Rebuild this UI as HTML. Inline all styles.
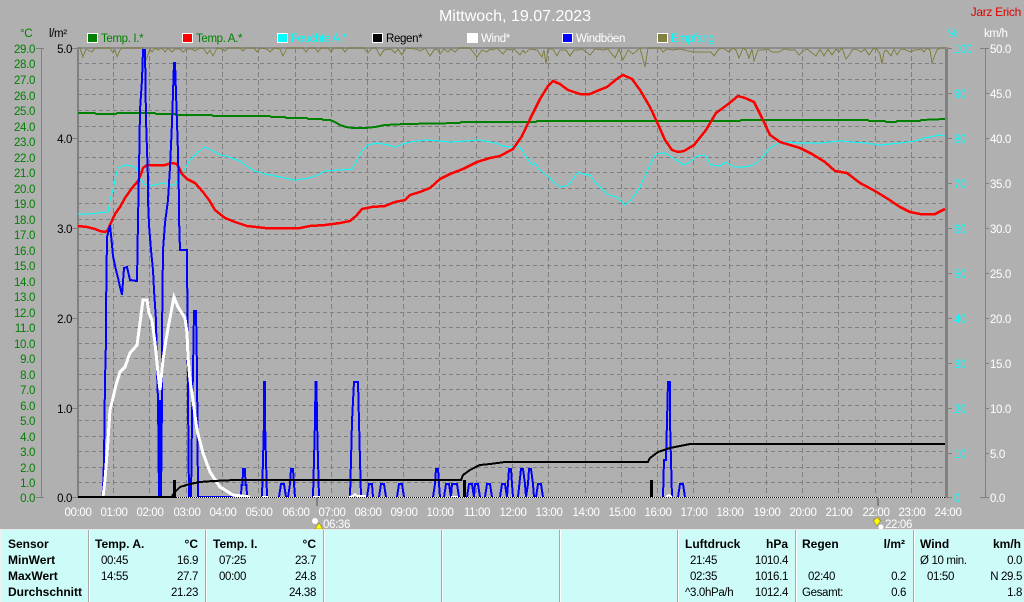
<!DOCTYPE html>
<html><head><meta charset="utf-8"><style>
html,body{margin:0;padding:0;background:#b0b0b0;overflow:hidden}
svg{display:block}
text{font-family:"Liberation Sans",sans-serif;font-size:11.5px;letter-spacing:-.35px}
.c{shape-rendering:crispEdges;fill:none}
.b{font-weight:bold;font-size:12px;letter-spacing:0;fill:#000}
.k{fill:#000}
.e{text-anchor:end}
.m{text-anchor:middle}
</style></head><body>
<svg width="1024" height="602" viewBox="0 0 1024 602" xmlns="http://www.w3.org/2000/svg">
<rect width="1024" height="602" fill="#b0b0b0"/>
<text x="515" y="21" class="m" style="font-size:16px;letter-spacing:0" fill="#fff">Mittwoch, 19.07.2023</text>
<text x="1021" y="16" class="e" style="font-size:12px;letter-spacing:-.3px" fill="#e00000">Jarz Erich</text>

<!-- legend -->
<g stroke="#fff" stroke-width="1" class="c" style="fill:none">
<rect x="87.500" y="33.500" width="10" height="9" style="fill:#008000"/>
<rect x="182.500" y="33.500" width="10" height="9" style="fill:#f00"/>
<rect x="277.500" y="33.500" width="10" height="9" style="fill:#0ff"/>
<rect x="372.500" y="33.500" width="10" height="9" style="fill:#000"/>
<rect x="467.500" y="33.500" width="10" height="9" style="fill:#fff"/>
<rect x="562.500" y="33.500" width="10" height="9" style="fill:#00f"/>
<rect x="657.500" y="33.500" width="10" height="9" style="fill:#808040"/>
</g>
<g>
<text x="101" y="42" fill="#008000">Temp. I.*</text>
<text x="196" y="42" fill="#008000">Temp. A.*</text>
<text x="291" y="42" fill="#0ff">Feuchte A.*</text>
<text x="386" y="42" fill="#000">Regen*</text>
<text x="481" y="42" fill="#fff">Wind*</text>
<text x="576" y="42" fill="#fff">Windböen</text>
<text x="671" y="42" fill="#0ff">Empfang</text>
</g>

<text x="20" y="37" fill="#008000">°C</text>
<text x="49" y="37" fill="#000">l/m²</text>
<text x="948" y="37" fill="#0ff">%</text>
<text x="984" y="37" fill="#fff">km/h</text>

<!-- grid -->
<path class="c" stroke="#808080" stroke-dasharray="4 3" d="M78 63.500H945M78 79.500H945M78 94.500H945M78 110.500H945M78 126.500H945M78 141.500H945M78 157.500H945M78 172.500H945M78 188.500H945M78 203.500H945M78 219.500H945M78 234.500H945M78 250.500H945M78 265.500H945M78 281.500H945M78 296.500H945M78 312.500H945M78 327.500H945M78 343.500H945M78 358.500H945M78 374.500H945M78 389.500H945M78 405.500H945M78 420.500H945M78 436.500H945M78 451.500H945M78 467.500H945M78 482.500H945"/>
<path class="c" stroke="#808080" stroke-dasharray="5 3" d="M113.500 48V498M149.500 48V498M186.500 48V498M222.500 48V498M258.500 48V498M295.500 48V498M331.500 48V498M367.500 48V498M403.500 48V498M439.500 48V498M476.500 48V498M512.500 48V498M548.500 48V498M585.500 48V498M621.500 48V498M657.500 48V498M693.500 48V498M729.500 48V498M766.500 48V498M802.500 48V498M838.500 48V498M875.500 48V498M911.500 48V498"/>

<!-- axes -->
<g class="c" stroke="#808080">
<path d="M41.500 48V498M36 48.500H44M36 497.500H44"/>
<path d="M72 48.500H78M72 138.500H78M72 228.500H78M72 318.500H78M72 408.500H78M72 497.500H78"/>
<path d="M947 48.500H952M947 93.500H952M947 138.500H952M947 183.500H952M947 228.500H952M947 273.500H952M947 318.500H952M947 363.500H952M947 408.500H952M947 453.500H952M947 497.500H952"/>
<path d="M985.500 48V498M980 48.500H989M985 93.500H989M985 138.500H989M985 183.500H989M985 228.500H989M985 273.500H989M985 318.500H989M985 363.500H989M985 408.500H989M985 453.500H989M980 497.500H989"/>
</g>
<rect x="77" y="47" width="2" height="451" fill="#808080"/>
<rect x="945" y="47" width="3" height="451" fill="#808080"/>
<rect x="77" y="47" width="871" height="2" fill="#8c8c8c"/>

<!-- left labels -->
<g fill="#008000" class="e">
<text x="35" y="53">29.0</text><text x="35" y="68">28.0</text><text x="35" y="84">27.0</text><text x="35" y="100">26.0</text><text x="35" y="115">25.0</text><text x="35" y="131">24.0</text><text x="35" y="146">23.0</text><text x="35" y="162">22.0</text><text x="35" y="177">21.0</text><text x="35" y="193">20.0</text><text x="35" y="208">19.0</text><text x="35" y="224">18.0</text><text x="35" y="239">17.0</text><text x="35" y="255">16.0</text><text x="35" y="270">15.0</text><text x="35" y="286">14.0</text><text x="35" y="301">13.0</text><text x="35" y="317">12.0</text><text x="35" y="332">11.0</text><text x="35" y="348">10.0</text><text x="35" y="363">9.0</text><text x="35" y="379">8.0</text><text x="35" y="394">7.0</text><text x="35" y="410">6.0</text><text x="35" y="425">5.0</text><text x="35" y="441">4.0</text><text x="35" y="456">3.0</text><text x="35" y="472">2.0</text><text x="35" y="487">1.0</text><text x="35" y="502">0.0</text>
</g>
<g fill="#000" class="e">
<text x="72" y="53">5.0</text><text x="72" y="143">4.0</text><text x="72" y="233">3.0</text><text x="72" y="323">2.0</text><text x="72" y="413">1.0</text><text x="72" y="502">0.0</text>
</g>
<g fill="#0ff">
<text x="954" y="53">100</text><text x="954" y="98">90</text><text x="954" y="143">80</text><text x="954" y="188">70</text><text x="954" y="233">60</text><text x="954" y="278">50</text><text x="954" y="323">40</text><text x="954" y="368">30</text><text x="954" y="413">20</text><text x="954" y="458">10</text><text x="954" y="502">0</text>
</g>
<g fill="#fff">
<text x="990" y="53">50.0</text><text x="990" y="98">45.0</text><text x="990" y="143">40.0</text><text x="990" y="188">35.0</text><text x="990" y="233">30.0</text><text x="990" y="278">25.0</text><text x="990" y="323">20.0</text><text x="990" y="368">15.0</text><text x="990" y="413">10.0</text><text x="990" y="458">5.0</text><text x="990" y="502">0.0</text>
</g>

<!-- olive -->
<polyline class="c" stroke="#808040" points="78,48 80,48 83,57 86,49 88,50 92,52 95,48 110,48 113,53 115,50 117,57 120,50 122,48 143,48 146,60 150,49 152,52 155,48 158,50 162,48 165,52 168,48 172,52 175,49 180,49 183,52 187,49 192,49 195,51 200,48 204,49 207,54 210,50 213,56 217,48 222,49 225,51 228,48 240,48 243,51 246,48 254,48 257,52 260,48 267,49 270,52 274,48 280,49 283,56 287,48 303,48 306,52 309,48 315,48 318,52 321,48 328,48 331,52 334,48 342,48 345,52 348,48 364,48 368,53 372,48 376,48 380,56 384,50 391,49 395,53 398,49 402,55 406,48 416,49 420,51 425,48 430,56 434,50 437,49 440,54 444,49 448,52 451,49 455,52 459,48 470,48 477,57 482,50 487,52 490,49 493,50 497,48 503,54 507,49 510,50 514,49 520,55 523,50 525,53 530,49 537,50 542,57 544,50 546,64 548,49 553,49 557,56 560,50 563,50 566,50 570,56 574,50 578,50 582,49 590,55 595,49 603,50 608,49 615,58 619,49 623,60 628,50 633,54 640,48 645,67 648,48 660,48 663,52 667,49 673,50 680,49 693,52 711,52 714,56 718,50 722,48 726,50 729,52 733,48 736,50 739,58 743,48 746,50 749,58 752,49 754,61 758,50 762,50 768,49 772,52 779,52 784,49 790,50 795,50 799,55 803,51 807,49 811,52 816,56 820,49 824,56 828,49 832,55 836,49 839,52 842,48 846,59 850,54 852,50 856,49 861,52 865,49 869,55 873,49 876,48 880,54 882,64 884,52 886,50 888,52 891,56 894,49 897,55 900,50 902,49 906,50 911,52 914,50 917,50 921,49 924,52 927,48 930,50 932,63 935,55 937,50 940,48 945,48"/>

<!-- cyan -->
<polyline class="c" stroke="#0ff" points="78,214 90,214 97,213 108,212 110,200 113,190 116,175 118,168 125,165 132,166 136,168 140,178 144,184 149,186 155,185 163,183 170,185 175,185 180,176 184,170 190,160 198,152 205,147 213,151 220,155 232,158 240,161 248,167 255,171 265,174 280,177 295,180 310,178 318,175 325,171 340,170 352,169 355,164 358,158 362,151 368,145 378,143 388,145 395,147 403,144 410,142 425,140 440,141 450,142 465,141 480,140 495,143 503,146 510,147 518,146 522,150 525,155 529,161 532,165 535,163 538,168 541,171 546,175 550,178 555,183 560,187 566,186 570,183 575,176 578,172 583,174 590,175 595,182 600,187 607,194 612,196 617,197 621,201 625,205 630,201 636,193 640,187 645,176 650,165 656,154 665,153 675,159 684,165 690,162 697,156 705,155 708,160 711,165 720,166 726,162 731,165 735,167 743,167 750,166 755,164 760,160 765,154 770,148 777,144 785,142 800,143 820,143 830,142 840,141 852,142 865,143 880,145 890,144 900,143 915,141 925,138 930,137 940,135 945,136"/>

<!-- green -->
<polyline class="c" stroke="#008000" stroke-width="2" points="78,113 95,113 96,114 116,114 117,113 155,113 156,114 175,114 176,115 212,115 213,116 270,116 271,117 285,117 286,118 307,118 308,119 322,119 323,120 330,120 335,122 340,125 346,127 353,128 365,128 375,127 385,125 405,124 460,123 461,122 536,122 537,121 740,121 741,120 868,120 869,121 885,121 886,122 896,122 897,121 920,121 921,120 945,119"/>

<!-- red -->
<polyline class="c" stroke="#f00" stroke-width="2.500" points="78,226 87,227 95,229 100,231 105,232 108,230 110,225 115,214 120,207 125,198 132,188 138,181 141,174 143,168 147,165 155,165 165,165 172,163 177,164 182,174 187,179 195,183 203,192 209,200 215,210 225,218 235,222 247,226 265,228 280,228 300,228 310,226 325,225 340,223 350,221 356,216 362,209 372,207 385,206 395,202 405,200 410,195 420,192 430,188 440,179 450,174 463,169 477,162 490,158 500,156 513,149 522,136 530,119 540,99 548,86 553,81 560,84 568,90 580,94 590,94 597,91 607,87 618,78 623,75 632,79 640,90 650,107 657,122 665,140 672,150 678,152 684,151 694,145 706,130 716,113 727,105 738,96 745,98 754,102 762,118 770,135 780,142 800,148 812,154 825,162 835,171 847,173 860,183 875,191 888,199 900,207 910,212 920,214 935,214 945,209"/>

<!-- blue gusts -->
<path class="c" stroke="#00f" stroke-width="2" d="M102 497L103 490 104 460 105 380 106 340 106 310 107 237 110 225 112 245 113 256 115 266 118 278 120 287 122 295 124 268 127 267 130 280 137 281 138 220 139 170 140 110 142 80 143 50 145 50 146 120 148 180 148 200 149 225 151 250 153 270 154 290 156 320 157 372 158 400 159 497 160 400 161 497 162 400 162 333 163 250 165 223 168 200 170 167 172 123 173 93 174 63 175 63 176 93 177 123 178 153 179 200 179 218 180 250 187 250 188 400 189 497 191 497 192 420 193 370 194 311 196 311 197 370 198 497H233
M241 497L241.500 485 242.500 485 243 469 245 469 245.500 485 246.500 485 247 497
M262 497L263 460 264 421 264 382 265 382 265 421 266 460 267 497
M279 497L281 484 284 484 286 497
M288 497L290 484 291 469 293 469 294 484 295 497
M313 497L314 460 315 421 315.500 382 316.500 382 317 421 318 460 319 497
M350 497L351 460 352 421 354 382 358 382 359 421 360 460 361 497
M367 497L369 484 372 484 373 497
M379 497L381 484 384 484 386 497
M397 497L399 484 402 484 404 497
M433 497L435 484 436 469 438 469 439 484 440 497
M444 497L446 484 449 484 451 497 452 484 455 484 457 484 459 497
M467 497L469 484 472 484 474 497 475 484 478 484 480 497
M485 497L487 484 490 484 492 497
M500 497L502 484 505 484 507 497 508 484 509 469 511 469 512 484 513 497
M518 497L521 469 523 469 525 484 526 497 528 484 529 469 531 469 533 484 534 497
M536 497L538 484 541 484 543 497
M663 497L664 460 666 460 667 421 668 382 670 382 670 421 671 460 672 497
M678 497L680 484 683 484 685 497"/>

<!-- white wind -->
<polyline class="c" stroke="#fff" stroke-width="3" points="103,497 105,480 108,440 110,410 113,398 116,385 120,372 125,367 130,353 137,345 140,323 143,300 147,300 149,313 152,320 155,343 158,373 160,390 163,360 166,340 169,323 174,297 178,307 185,318 187,333 188,357 190,380 193,400 197,430 203,453 210,472 220,487 233,495 250,497"/>
<path class="c" stroke="#fff" stroke-width="2" d="M262 497H268M313 497H320M349 497L353 496 355 494 357 496 366 496M451 497H458M666 497L669 495 672 497"/>

<!-- black rain -->
<rect x="78" y="496" width="95" height="2" fill="#000"/>
<polyline class="c" stroke="#000" stroke-width="2" points="172,496 175,492 180,487 190,484 200,482 213,481 235,480 461,480 463,475 470,470 480,465 490,464 505,462 648,462 650,458 658,452 670,448 680,446 690,444 945,444"/>
<rect x="173" y="480" width="3" height="18" fill="#000"/>
<rect x="463" y="480" width="3" height="18" fill="#000"/>
<rect x="650" y="480" width="3" height="18" fill="#000"/>
<path class="c" stroke="#fff" d="M176 497.500H945"/>
<path class="c" stroke="#000" stroke-dasharray="1 1" d="M176 497.500H945"/>

<!-- time labels -->
<g fill="#fff" class="m">
<text x="78" y="516">00:00</text><text x="114" y="516">01:00</text><text x="150" y="516">02:00</text><text x="187" y="516">03:00</text><text x="223" y="516">04:00</text><text x="259" y="516">05:00</text><text x="296" y="516">06:00</text><text x="332" y="516">07:00</text><text x="368" y="516">08:00</text><text x="404" y="516">09:00</text><text x="440" y="516">10:00</text><text x="477" y="516">11:00</text><text x="513" y="516">12:00</text><text x="549" y="516">13:00</text><text x="586" y="516">14:00</text><text x="622" y="516">15:00</text><text x="658" y="516">16:00</text><text x="694" y="516">17:00</text><text x="730" y="516">18:00</text><text x="767" y="516">19:00</text><text x="803" y="516">20:00</text><text x="839" y="516">21:00</text><text x="876" y="516">22:00</text><text x="912" y="516">23:00</text><text x="948" y="516">24:00</text>
</g>

<!-- sun markers -->
<rect x="316" y="497" width="2" height="9" fill="#808080"/>
<rect x="877" y="497" width="2" height="9" fill="#808080"/>
<circle cx="315" cy="521" r="3" fill="#fff"/>
<path d="M319 523L323 529H315Z" fill="#ff0" stroke="#806000" stroke-width=".5"/>
<text x="323" y="528" fill="#fff">06:36</text>
<path d="M877 526L873 520 875 520 875 518 879 518 879 520 881 520Z" fill="#ff0" stroke="#806000" stroke-width=".5"/>
<circle cx="881" cy="527" r="2.500" fill="#fff"/>
<text x="885" y="528" fill="#fff">22:06</text>

<!-- panel -->
<rect x="0" y="529" width="1024" height="73" fill="#ccfbf8"/>
<rect x="0" y="529" width="1024" height="1" fill="#e8e8e8"/>
<rect x="0" y="529" width="1" height="73" fill="#f0f0f0"/>
<g fill="#a8a8a8">
<rect x="88" y="530" width="1" height="72"/><rect x="205" y="530" width="1" height="72"/><rect x="323" y="530" width="1" height="72"/><rect x="441" y="530" width="1" height="72"/><rect x="559" y="530" width="1" height="72"/><rect x="677" y="530" width="1" height="72"/><rect x="795" y="530" width="1" height="72"/><rect x="913" y="530" width="1" height="72"/>
</g>
<g fill="#fff">
<rect x="89" y="530" width="1" height="72"/><rect x="206" y="530" width="1" height="72"/><rect x="324" y="530" width="1" height="72"/><rect x="442" y="530" width="1" height="72"/><rect x="560" y="530" width="1" height="72"/><rect x="678" y="530" width="1" height="72"/><rect x="796" y="530" width="1" height="72"/><rect x="914" y="530" width="1" height="72"/>
</g>
<g>
<text x="8" y="548" class="b">Sensor</text><text x="8" y="564" class="b">MinWert</text><text x="8" y="580" class="b">MaxWert</text><text x="8" y="596" class="b">Durchschnitt</text>
<text x="95" y="548" class="b">Temp. A.</text><text x="198" y="548" class="b e">°C</text>
<text x="101" y="564" class="k">00:45</text><text x="198" y="564" class="k e">16.9</text>
<text x="101" y="580" class="k">14:55</text><text x="198" y="580" class="k e">27.7</text>
<text x="198" y="596" class="k e">21.23</text>
<text x="213" y="548" class="b">Temp. I.</text><text x="316" y="548" class="b e">°C</text>
<text x="219" y="564" class="k">07:25</text><text x="316" y="564" class="k e">23.7</text>
<text x="219" y="580" class="k">00:00</text><text x="316" y="580" class="k e">24.8</text>
<text x="316" y="596" class="k e">24.38</text>
<text x="685" y="548" class="b">Luftdruck</text><text x="788" y="548" class="b e">hPa</text>
<text x="690" y="564" class="k">21:45</text><text x="788" y="564" class="k e">1010.4</text>
<text x="690" y="580" class="k">02:35</text><text x="788" y="580" class="k e">1016.1</text>
<text x="685" y="596" class="k">^3.0hPa/h</text><text x="788" y="596" class="k e">1012.4</text>
<text x="802" y="548" class="b">Regen</text><text x="905" y="548" class="b e">l/m²</text>
<text x="808" y="580" class="k">02:40</text><text x="906" y="580" class="k e">0.2</text>
<text x="802" y="596" class="k">Gesamt:</text><text x="906" y="596" class="k e">0.6</text>
<text x="920" y="548" class="b">Wind</text><text x="1021" y="548" class="b e">km/h</text>
<text x="920" y="564" class="k">Ø 10 min.</text><text x="1022" y="564" class="k e">0.0</text>
<text x="927" y="580" class="k">01:50</text><text x="1022" y="580" class="k e">N 29.5</text>
<text x="1022" y="596" class="k e">1.8</text>
</g>
</svg>
</body></html>
